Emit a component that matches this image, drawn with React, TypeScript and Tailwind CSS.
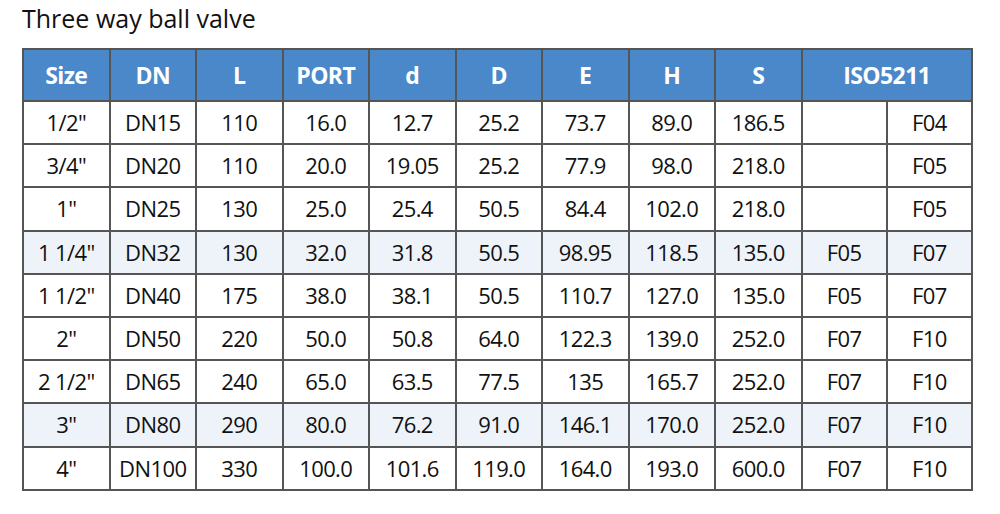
const heads = ["Size", "DN", "L", "PORT", "d", "D", "E", "H", "S"];

// [size, dn, L, port, d, D, E, H, S, iso1, iso2]
const rows: string[][] = [
  ['1/2"', "DN15", "110", "16.0", "12.7", "25.2", "73.7", "89.0", "186.5", "", "F04"],
  ['3/4"', "DN20", "110", "20.0", "19.05", "25.2", "77.9", "98.0", "218.0", "", "F05"],
  ['1"', "DN25", "130", "25.0", "25.4", "50.5", "84.4", "102.0", "218.0", "", "F05"],
  ['1 1/4"', "DN32", "130", "32.0", "31.8", "50.5", "98.95", "118.5", "135.0", "F05", "F07"],
  ['1 1/2"', "DN40", "175", "38.0", "38.1", "50.5", "110.7", "127.0", "135.0", "F05", "F07"],
  ['2"', "DN50", "220", "50.0", "50.8", "64.0", "122.3", "139.0", "252.0", "F07", "F10"],
  ['2 1/2"', "DN65", "240", "65.0", "63.5", "77.5", "135", "165.7", "252.0", "F07", "F10"],
  ['3"', "DN80", "290", "80.0", "76.2", "91.0", "146.1", "170.0", "252.0", "F07", "F10"],
  ['4"', "DN100", "330", "100.0", "101.6", "119.0", "164.0", "193.0", "600.0", "F07", "F10"],
];

// rows with the pale blue fill
const shaded = new Set([3, 7]);

export default function App() {
  return (
    <div className="w-[1000px] h-[514px] bg-white font-['Open_Sans',sans-serif] text-[#111]">
      <h1 className="pl-[22px] pt-[1px] h-[48px] text-[25px] leading-[34px]">
        Three way ball valve
      </h1>
      <table className="ml-[22px] w-[951px] table-fixed border-collapse border-2 border-[#555] text-[22px] tracking-[-0.6px]">
        <thead>
          <tr className="h-[52px] bg-[#4a88c9] text-white text-[23px]">
            {heads.map((h) => (
              <th key={h} className="w-[86.5px] border-2 border-[#555] text-center font-bold">
                {h}
              </th>
            ))}
            <th colSpan={2} className="border-2 border-[#555] text-center font-bold">
              ISO5211
            </th>
          </tr>
        </thead>
        <tbody>
          {rows.map((r, i) => (
            <tr key={i} className={shaded.has(i) ? "h-[43.2px] bg-[#eef3fa]" : "h-[43.2px] bg-white"}>
              {r.map((c, j) => (
                <td key={j} className="border-2 border-[#555] text-center p-0">
                  {c}
                </td>
              ))}
            </tr>
          ))}
        </tbody>
      </table>
    </div>
  );
}
